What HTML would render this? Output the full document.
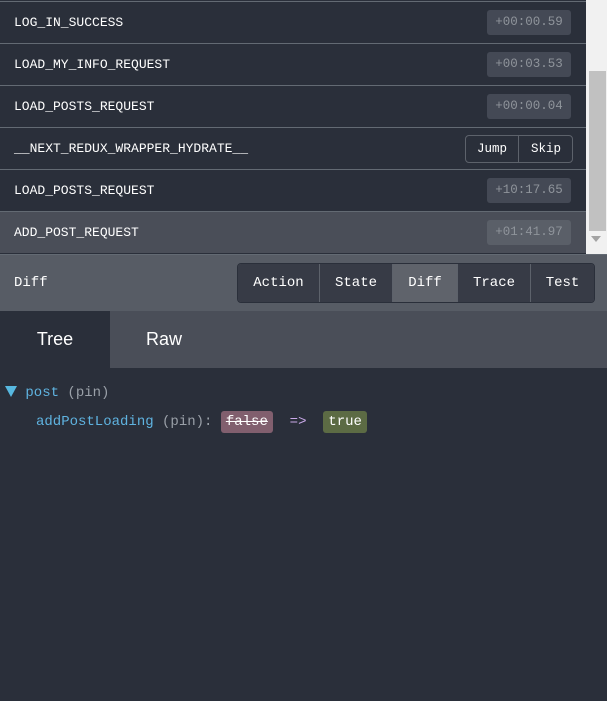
<!DOCTYPE html><html><head><style>
body{margin:0;width:607px;height:701px;background:#2a2f3a;font-family:"Liberation Mono",monospace;overflow:hidden;position:relative}
.list{position:absolute;left:0;top:0;width:586px;height:254px;background:#2a2f3a}
.row{position:absolute;left:0;width:586px;height:41px;border-top:1px solid #636a73;color:#fff;font-size:13px}
.row .n{position:absolute;left:14px;top:13px}
.ts{position:absolute;right:15px;top:8px;width:84px;height:25px;background:#444955;border-radius:3px;color:#8f949b;font-size:12.5px;line-height:25px;text-align:center}
.sb{position:absolute;left:586px;top:0;width:21px;height:254px;background:#f1f1f1}
.th{position:absolute;left:3px;top:71px;width:17px;height:160px;background:#c1c1c1}
.bar{position:absolute;left:0;top:254px;width:607px;height:56px;background:#575c65;border-top:1px solid #636a73}
.btns{position:absolute;left:237px;top:8px;height:38px;display:flex;border:1px solid #2a2f3a;border-radius:4px;overflow:hidden}
.btns div{background:#373b46;color:#fff;font-size:14px;line-height:38px;text-align:center;border-left:1px solid #5d626b}
.tabs{position:absolute;left:0;top:311px;width:607px;height:57px;background:#4a4e58;font-family:"Liberation Sans",sans-serif;font-size:18px;color:#fff}
.pill{color:#fff;padding:3px 5px;border-radius:3px}
</style></head><body>
<div class="list">
<div class="row" style="top:1px"><span class="n">LOG_IN_SUCCESS</span><span class="ts">+00:00.59</span></div>
<div class="row" style="top:43px"><span class="n">LOAD_MY_INFO_REQUEST</span><span class="ts">+00:03.53</span></div>
<div class="row" style="top:85px"><span class="n">LOAD_POSTS_REQUEST</span><span class="ts">+00:00.04</span></div>
<div class="row" style="top:127px"><span class="n">__NEXT_REDUX_WRAPPER_HYDRATE__</span>
<span style="position:absolute;left:465px;top:7px;width:106px;height:26px;border:1px solid #5d626b;border-radius:4px;font-size:12.5px;line-height:26px"><span style="position:absolute;left:0;width:52px;text-align:center">Jump</span><span style="position:absolute;left:52px;width:54px;text-align:center;border-left:1px solid #5d626b">Skip</span></span></div>
<div class="row" style="top:169px"><span class="n">LOAD_POSTS_REQUEST</span><span class="ts">+10:17.65</span></div>
<div class="row" style="top:211px;background:#4a4e58"><span class="n">ADD_POST_REQUEST</span><span class="ts" style="background:#5a5f68">+01:41.97</span></div>
</div>
<div class="sb"><div class="th"></div><div style="position:absolute;left:5px;top:236px;border-left:5px solid transparent;border-right:5px solid transparent;border-top:6px solid #a3a3a3"></div></div>
<div class="bar"><span style="position:absolute;left:14px;top:20px;color:#fff;font-size:14px">Diff</span>
<div class="btns"><div style="width:81px;border-left:0">Action</div><div style="width:72px">State</div><div style="width:64px;background:#5f636b">Diff</div><div style="width:72px">Trace</div><div style="width:63px">Test</div></div></div>
<div class="tabs"><div style="position:absolute;left:0;top:0;width:110px;height:57px;background:#2a2f3a;text-align:center;line-height:57px">Tree</div><div style="position:absolute;left:110px;width:108px;text-align:center;line-height:57px">Raw</div></div>
<div style="position:absolute;left:5px;top:385px;font-size:14px;color:#9aa0a8">
<span style="display:inline-block;width:0;height:0;border-left:6px solid transparent;border-right:6px solid transparent;border-top:11px solid #57b8e0;vertical-align:-1px"></span> <span style="color:#5fb3e0">post</span> (pin)</div>
<div style="position:absolute;left:36px;top:411px;font-size:14px;color:#9aa0a8;line-height:22px"><span style="color:#5fb3e0">addPostLoading</span> (pin): <span class="pill" style="background:#815f6e;text-decoration:line-through">false</span> &nbsp;<span style="color:#c9a9e8">=&gt;</span>&nbsp; <span class="pill" style="background:#5c6b44">true</span></div>
</body></html>
